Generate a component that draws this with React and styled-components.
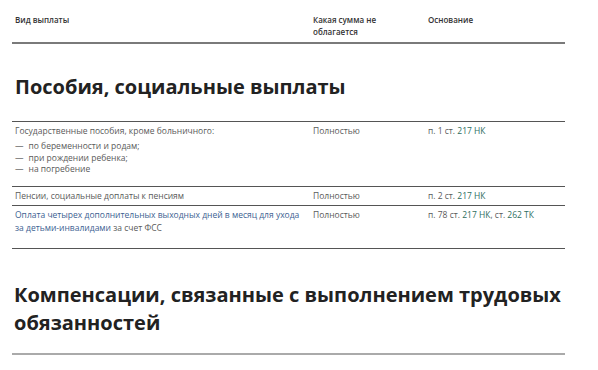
import React, { Fragment } from "react";
import styled, { createGlobalStyle } from "styled-components";

const GlobalStyle = createGlobalStyle`
  body {
    margin: 0;
    background: #fff;
    font-family: "Open Sans", "Liberation Sans", sans-serif;
  }
`;

const Page = styled.div`
  width: 553px;
  padding: 11px 0 0 12px;
`;

const Row = styled.div`
  display: grid;
  grid-template-columns: 298px 115px 1fr;
  padding: ${(p) => p.$pad || "3px 3px 4px"};
  border-bottom: 1px solid #555;
  font-size: 8.5px;
  line-height: ${(p) => p.$lh || "12px"};
  color: #5a5a5a;
`;

const HeadRow = styled(Row)`
  padding: 3px 3px 4px;
  border-bottom: 2px solid #7a7a7a;
  font-size: 8px;
  font-weight: 600;
  color: #333;
  line-height: 12px;
`;

const Cell = styled.div`
  padding-right: 5px;
`;

const HeadCell = styled.div`
  padding-right: 30px;
`;

const Heading = styled.h2`
  margin: 0;
  padding: ${(p) => p.$pad};
  font-size: 20px;
  line-height: 28px;
  font-weight: 700;
  color: #222;
  border-bottom: ${(p) => (p.$line ? "2px solid #aaa" : "1px solid #555")};
`;

const List = styled.ul`
  list-style: none;
  margin: 3px 0 8px;
  padding: 0;
`;

const Item = styled.li`
  line-height: 11.6px;

  &::before {
    content: "—";
    margin-right: 5px;
  }
`;

const Link = styled.span`
  color: ${(p) => (p.$green ? "#2d6e5e" : "#3d5f92")};
`;

export default function App() {
  return (
    <Fragment>
      <GlobalStyle />
      <Page>
        <HeadRow>
          <HeadCell>Вид выплаты</HeadCell>
          <HeadCell>Какая сумма не облагается</HeadCell>
          <HeadCell>Основание</HeadCell>
        </HeadRow>
        <Heading $pad="29px 3px 20px">Пособия, социальные выплаты</Heading>
        <Row $pad="3px 3px 3px">
          <Cell>
            <div>Государственные пособия, кроме больничного:</div>
            <List>
              <Item>по беременности и родам;</Item>
              <Item>при рождении ребенка;</Item>
              <Item>на погребение</Item>
            </List>
          </Cell>
          <Cell>Полностью</Cell>
          <Cell>
            п. 1 ст. <Link $green>217 НК</Link>
          </Cell>
        </Row>
        <Row $pad="3px 3px 3px">
          <Cell>Пенсии, социальные доплаты к пенсиям</Cell>
          <Cell>Полностью</Cell>
          <Cell>
            п. 2 ст. <Link $green>217 НК</Link>
          </Cell>
        </Row>
        <Row $pad="2px 3px 14px" $lh="13px">
          <Cell>
            <Link>Оплата четырех дополнительных выходных дней в месяц для ухода за детьми-инвалидами</Link>{" "}
            за счет ФСС
          </Cell>
          <Cell>Полностью</Cell>
          <Cell>
            п. 78 ст. <Link $green>217 НК</Link>, ст. <Link $green>262 ТК</Link>
          </Cell>
        </Row>
        <Heading $pad="32px 2px 16px" $line>
          Компенсации, связанные с выполнением трудовых обязанностей
        </Heading>
      </Page>
    </Fragment>
  );
}
